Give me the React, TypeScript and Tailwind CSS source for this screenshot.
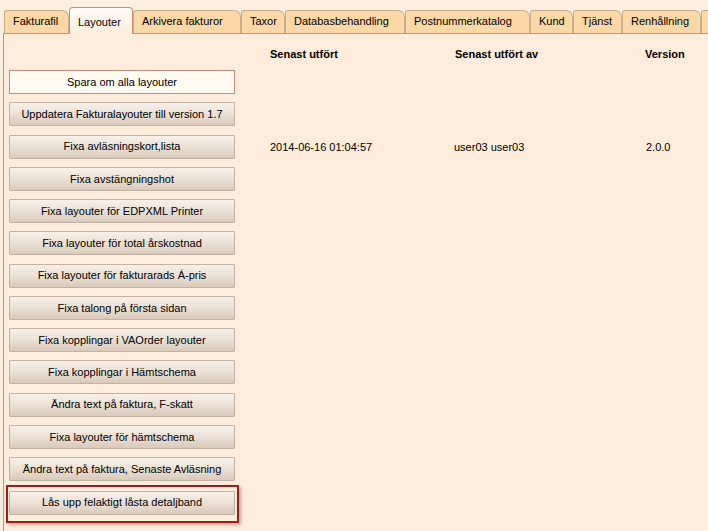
import React from "react";

// Tab strip: label + width in px
const tabs = [
  { label: "Fakturafil", w: 65 },
  { label: "Layouter", w: 64, active: true },
  { label: "Arkivera fakturor", w: 108 },
  { label: "Taxor", w: 44 },
  { label: "Databasbehandling", w: 120 },
  { label: "Postnummerkatalog", w: 125 },
  { label: "Kund", w: 43 },
  { label: "Tjänst", w: 49 },
  { label: "Renhållning", w: 79 },
  { label: "", w: 40 },
];

const actions = [
  "Uppdatera Fakturalayouter till version 1.7",
  "Fixa avläsningskort,lista",
  "Fixa avstängningshot",
  "Fixa layouter för EDPXML Printer",
  "Fixa layouter för total årskostnad",
  "Fixa layouter för fakturarads Á-pris",
  "Fixa talong på första sidan",
  "Fixa kopplingar i VAOrder layouter",
  "Fixa kopplingar i Hämtschema",
  "Ändra text på faktura, F-skatt",
  "Fixa layouter för hämtschema",
  "Ändra text på faktura, Senaste Avläsning",
];

function ActionButton({ label }: { label: string }) {
  return (
    <button className="w-[226px] h-[24px] shrink-0 border border-[#c2b2a3] rounded-[1px] bg-gradient-to-b from-[#f7f1ea] via-[#ebe0d5] to-[#d9c9bb] text-[11px] text-black whitespace-nowrap">
      {label}
    </button>
  );
}

export default function App() {
  return (
    <div
      className="w-[708px] h-[531px] overflow-hidden bg-[#fdefdf] text-black"
      style={{ fontFamily: '"Liberation Sans", Arial, sans-serif' }}
    >
      {/* Tabs */}
      <div className="flex items-end h-[33px] pl-[4px] relative z-10">
        {tabs.map((t, i) =>
          t.active ? (
            <div
              key={i}
              style={{ width: t.w }}
              className="h-[27px] -mb-[1px] shrink-0 border border-b-0 border-[#c98b7b] rounded-t-[4px] bg-gradient-to-b from-[#fffcf8] to-[#fdecdc] pl-[8px] pt-[8px] text-[11px] leading-[13px]"
            >
              {t.label}
            </div>
          ) : (
            <div
              key={i}
              style={{ width: t.w }}
              className="h-[23px] shrink-0 border border-b-0 border-[#c9ad92] rounded-tl-[3px] rounded-tr-[7px] bg-[#fbd8a6] pl-[8px] pt-[4px] text-[11px] leading-[13px] whitespace-nowrap overflow-hidden"
            >
              {t.label}
            </div>
          )
        )}
      </div>

      {/* Panel */}
      <div className="ml-[3px] h-[498px] border-t border-l border-[#cf8f80] bg-[#fdecdc] flex">
        <div className="w-[236px] shrink-0 pl-[5px] pt-[36px] flex flex-col gap-[8.25px]">
          <button className="w-[226px] h-[24px] shrink-0 border border-[#cf8a80] bg-[#fffbf3] text-[11px] text-black">
            Spara om alla layouter
          </button>
          {actions.map((a) => (
            <ActionButton key={a} label={a} />
          ))}
          <div className="-ml-[3px] -mt-[4px] w-[233px] border-2 border-[#a3191c] pl-[1px] pt-[2px] pb-[6px] shadow-[2px_2px_3px_rgba(120,90,70,0.45)]">
            <ActionButton label="Lås upp felaktigt låsta detaljband" />
          </div>
        </div>

        <div className="pl-[30px] pt-[14px] text-[11px] leading-[13px]">
          <div className="grid grid-cols-[185px_190px_60px] font-bold">
            <div>Senast utfört</div>
            <div>Senast utfört av</div>
            <div>Version</div>
          </div>
          <div className="grid grid-cols-[185px_190px_60px] mt-[80px]">
            <div>2014-06-16 01:04:57</div>
            <div className="-ml-[1px]">user03 user03</div>
            <div className="ml-[1px]">2.0.0</div>
          </div>
        </div>
      </div>
    </div>
  );
}
